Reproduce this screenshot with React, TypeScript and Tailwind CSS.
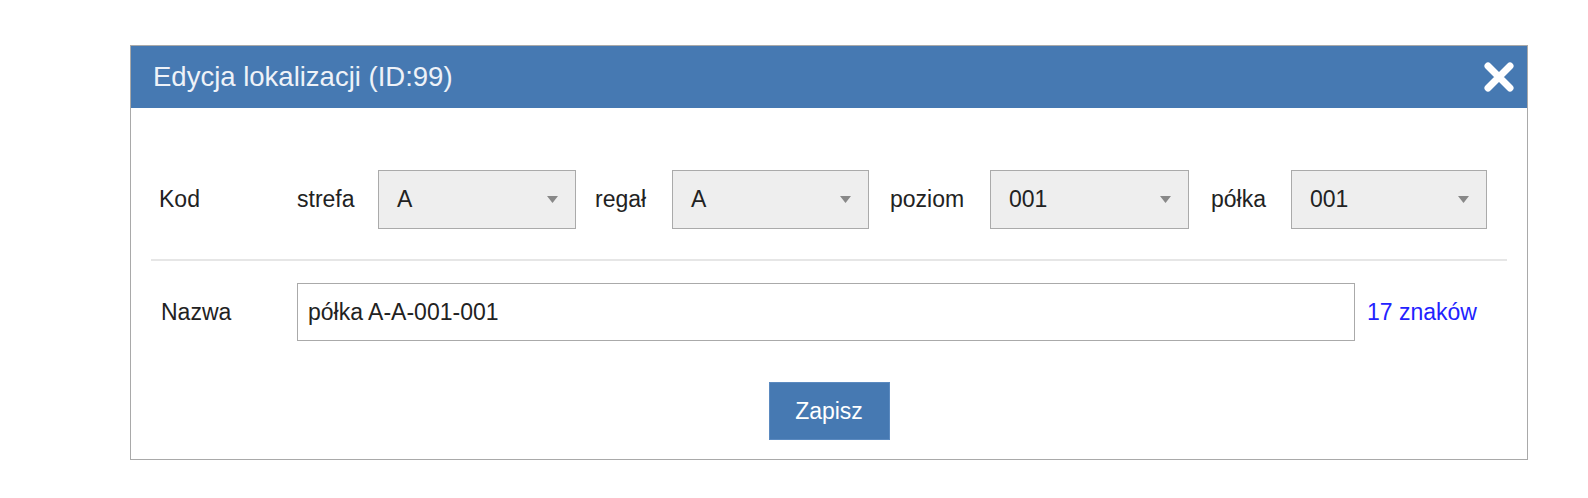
import React, { useState } from "react";

const font = { fontFamily: '"Liberation Sans", Arial, sans-serif' };

interface SelectBoxProps {
  value: string;
  width: string;
}

const SelectBox: React.FC<SelectBoxProps> = ({ value, width }) => (
  <div
    className={`${width} h-[59px] shrink-0 flex items-center justify-between bg-[#eeeeee] border border-[#aaaaaa] pl-[18px] pr-[17px]`}
  >
    <span className="text-[23px] text-[#222]">{value}</span>
    <svg width="11" height="7" viewBox="0 0 11 7">
      <path d="M0 0 L11 0 L5.5 7 Z" fill="#888" />
    </svg>
  </div>
);

export default function App() {
  const [name, setName] = useState("półka A-A-001-001");

  return (
    <div className="w-[1588px] h-[498px] bg-white" style={font}>
      <div className="pt-[45px] pl-[130px]">
        <div className="w-[1398px] border border-[#a9a9a9] bg-white">
          {/* header */}
          <div className="h-[62px] bg-[#4679b2] flex items-center justify-between pl-[22px] pr-[12px]">
            <span className="text-[27.5px] text-[#eef2f8]">Edycja lokalizacji (ID:99)</span>
            <svg width="32" height="30" viewBox="0 0 32 30">
              <path d="M5 4 L27 26 M27 4 L5 26" stroke="#fff" strokeWidth="7" strokeLinecap="round" />
            </svg>
          </div>

          {/* body */}
          <div className="px-[20px] pt-[62px] pb-[19px] text-[23px] text-[#222]">
            <div className="flex items-center">
              <div className="w-[146px] pl-[8px]">Kod</div>
              <div className="w-[81px]">strefa</div>
              <SelectBox value="A" width="w-[198px]" />
              <div className="w-[96px] pl-[19px]">regał</div>
              <SelectBox value="A" width="w-[197px]" />
              <div className="w-[121px] pl-[21px]">poziom</div>
              <SelectBox value="001" width="w-[199px]" />
              <div className="w-[102px] pl-[22px]">półka</div>
              <SelectBox value="001" width="w-[196px]" />
            </div>

            <div className="mt-[30px] h-[2px] bg-[#e6e6e6]" />

            <div className="mt-[22px] flex items-center">
              <div className="w-[146px] pl-[10px]">Nazwa</div>
              <input
                className="w-[1058px] h-[58px] border border-[#aaaaaa] bg-white pl-[10px] text-[23px] text-[#222] outline-none"
                style={font}
                value={name}
                onChange={(e) => setName(e.target.value)}
              />
              <span className="ml-[12px] text-[#2222ff]">{name.length} znaków</span>
            </div>

            <div className="mt-[41px] flex justify-center">
              <button className="w-[121px] h-[58px] bg-[#4679b2] border border-[#5b8ac0] text-white text-[23px]">
                Zapisz
              </button>
            </div>
          </div>
        </div>
      </div>
    </div>
  );
}
